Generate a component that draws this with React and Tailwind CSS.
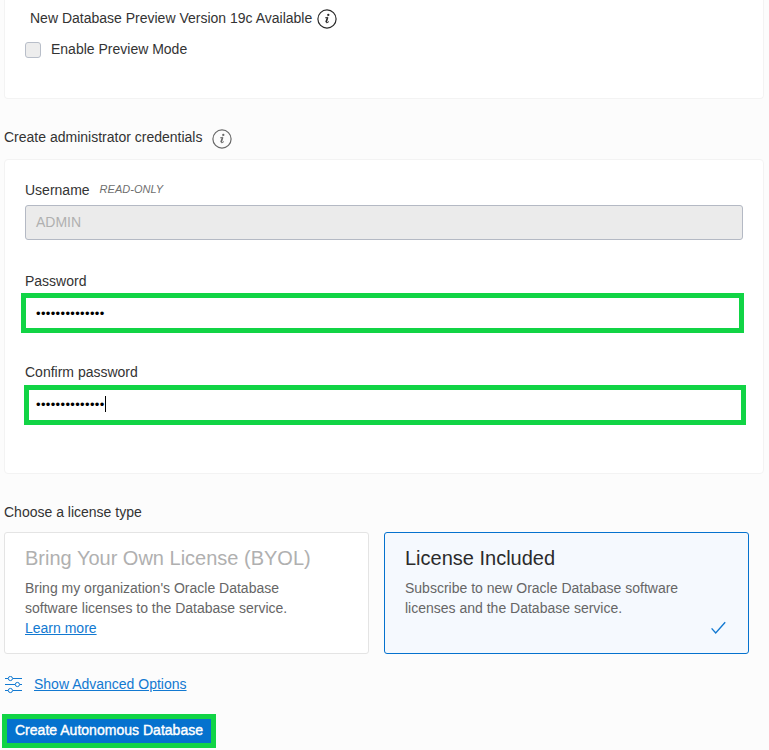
const DOTS = "••••••••••••••";

function InfoIcon({ className }) {
  return (
    <svg className={className} width="20" height="20" viewBox="0 0 20 20">
      <circle cx="10" cy="10" r="9.1" fill="none" stroke="currentColor" strokeWidth="1.2" />
      <circle cx="11.3" cy="5.9" r="1.15" fill="currentColor" />
      <path d="M8 8.9 10.7 8.2" fill="none" stroke="currentColor" strokeWidth="0.8" />
      <path d="M10.6 8.3 9.1 13.2" fill="none" stroke="currentColor" strokeWidth="1.7" />
      <path d="M8.9 13.4Q9.6 14.8 12 12.5" fill="none" stroke="currentColor" strokeWidth="0.9" />
    </svg>
  );
}

function SlidersIcon() {
  return (
    <svg width="18" height="18" viewBox="0 0 18 18" fill="none" stroke="#1279d1" strokeWidth="1">
      <path d="M0 2.5h3M8 2.5h9M0 8.5h10M15 8.5h2M0 14.5h3M8 14.5h9" />
      <circle cx="5.4" cy="2.5" r="2.1" />
      <circle cx="12.4" cy="8.5" r="2.1" />
      <circle cx="5.4" cy="14.5" r="2.1" />
    </svg>
  );
}

export default function App() {
  return (
    <div className="flex h-[750px] w-[769px] flex-col overflow-hidden bg-[#fcfcfc] font-['Liberation_Sans',Arial,sans-serif] text-sm leading-5 text-[#333333]">
      <section className="ml-1 h-[99px] w-[760px] shrink-0 rounded-b border border-t-0 border-[#f3f3f3] bg-white px-5 pt-2">
        <div className="ml-[5px] flex h-5 items-start">
          <span>New Database Preview Version 19c Available</span>
          <InfoIcon className="mt-px ml-[5px] text-[#2b2b2b]" />
        </div>
        <label className="mt-[11px] flex h-5 items-start">
          <span className="mt-[3px] mr-[10px] size-4 rounded-[3px] border border-[#b8bec9] bg-[#ededed]" />
          Enable Preview Mode
        </label>
      </section>

      <h2 className="mt-7 ml-1 flex h-5 shrink-0 items-start">
        Create administrator credentials
        <InfoIcon className="mt-[2px] ml-[10px] text-[#6a6a6a]" />
      </h2>

      <section className="mt-3 ml-1 flex h-[315px] w-[760px] shrink-0 flex-col rounded border border-[#f3f3f3] bg-white px-5 pt-5">
        <div className="flex h-5 items-start">
          <span>Username</span>
          <span className="mt-[-1px] ml-[10px] text-[11px] tracking-[0.03px] text-[#6f6f6f] italic">READ-ONLY</span>
        </div>
        <div className="mt-[5px] flex h-[35px] w-[718px] items-center rounded-[3px] border border-[#b4b9c4] bg-[#ebebeb] px-[10px] pb-px text-[#b0b0b0]">
          ADMIN
        </div>
        <div className="mt-[31px] h-5">Password</div>
        <div className="mt-[2px] -ml-1 flex h-10 w-[723px] items-center border-[5px] border-[#11d445] pt-[2px] pl-[10px] text-[13px] tracking-[0.35px] text-black">
          {DOTS}
        </div>
        <div className="mt-[29px] h-5">Confirm password</div>
        <div className="mt-[3px] -ml-px flex h-10 w-[722px] items-center border-[5px] border-[#11d445] pl-[7px] text-[13px] tracking-[0.35px] text-black">
          {DOTS}
          <span className="mb-[2px] h-4 w-px bg-black" />
        </div>
      </section>

      <h2 className="mt-7 ml-1 h-5 shrink-0">Choose a license type</h2>

      <div className="mt-[10px] ml-1 flex shrink-0 gap-[15px]">
        <div className="h-[122px] w-[365px] rounded-[3px] border border-[#e4e4e4] bg-white px-5 pt-[13px]">
          <h3 className="text-xl leading-6 text-[#b0b0b0]">Bring Your Own License (BYOL)</h3>
          <p className="mt-2 text-[#666666]">
            Bring my organization's Oracle Database
            <br />
            software licenses to the Database service.
            <br />
            <a className="text-[#1279d1] underline">Learn more</a>
          </p>
        </div>
        <div className="h-[122px] w-[365px] rounded-[3px] border border-[#0572ce] bg-[#f5f9fe] px-5 pt-[13px]">
          <h3 className="text-xl leading-6 text-[#2b2b2b]">License Included</h3>
          <p className="mt-2 text-[#666666]">
            Subscribe to new Oracle Database software
            <br />
            licenses and the Database service.
          </p>
          <svg className="mt-[3px] ml-auto" width="19" height="16" viewBox="0 0 19 16" fill="none" stroke="#1279d1" strokeWidth="1.4">
            <path d="M2.6 7.4 6.7 11.9 16.2 1.2" />
          </svg>
        </div>
      </div>

      <div className="mt-5 ml-[5px] flex h-5 shrink-0 items-start">
        <span className="mt-[2px] mr-[11px]">
          <SlidersIcon />
        </span>
        <a className="text-[#1279d1] underline">Show Advanced Options</a>
      </div>

      <button className="mt-5 ml-[2px] h-[34px] w-[214px] shrink-0 border-[5px] border-[#11d445] bg-[#0572ce] pb-[2px] text-sm leading-5 tracking-[0.02px] whitespace-nowrap text-white [-webkit-text-stroke:0.4px_white]">
        Create Autonomous Database
      </button>
    </div>
  );
}
